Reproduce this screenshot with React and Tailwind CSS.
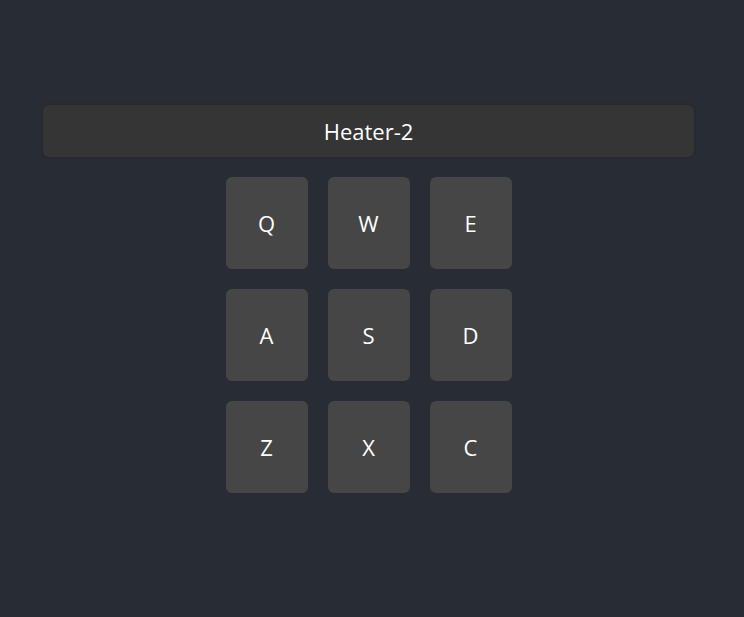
const keys = ['Q', 'W', 'E', 'A', 'S', 'D', 'Z', 'X', 'C'];

const App = () => {
    return (
        <div
            className="min-h-screen w-full bg-[#282c34] pt-[105px] pl-[43px] pr-[50px]"
            style={{ fontFamily: '"Open Sans", "Noto Sans", sans-serif' }}
        >
            <div className="flex flex-col items-center gap-5">
                {/* Display */}
                <div className="w-full h-[52px] rounded-md bg-[#363535] shadow-[0_0_3px_rgba(0,0,0,0.25)] flex items-center justify-center text-white text-[22px]">
                    Heater-2
                </div>
                {/* Pads */}
                <div className="grid grid-cols-3 gap-5">
                    {keys.map((k) => (
                        <button
                            key={k}
                            className="w-[82px] h-[92px] rounded-md bg-[#464646] text-white text-[22px] flex items-center justify-center"
                        >
                            {k}
                        </button>
                    ))}
                </div>
            </div>
        </div>
    );
};

export default App;
